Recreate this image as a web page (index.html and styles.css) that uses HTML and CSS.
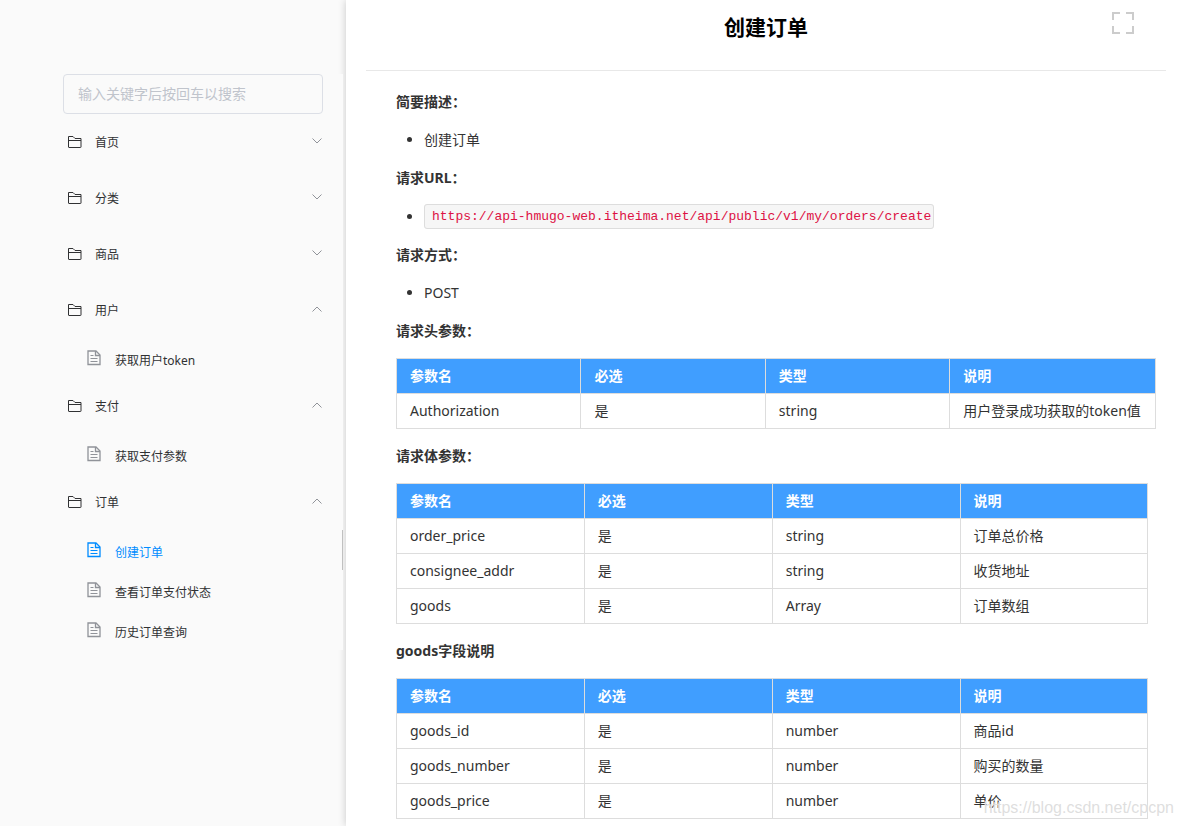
FILE: index.html
```html
<!DOCTYPE html>
<html lang="zh-CN">
<head>
<meta charset="utf-8">
<meta name="viewport" content="width=device-width, initial-scale=1">
<title>创建订单</title>
<link rel="stylesheet" href="styles.css">
</head>
<body>
<svg class="symbols" aria-hidden="true">
  <symbol id="folder" viewBox="0 0 16 14"><path d="M1.500 12V1.500h4.500l2 2h6V12q0 .5-.5 .5H2q-.5 0-.5-.5zM1.500 5.500h12.500" fill="none" stroke="currentColor"/></symbol>
  <symbol id="doc" viewBox="0 0 14 16"><path d="M1 1h8l4 4v9.500H1z" fill="none" stroke="currentColor" stroke-width="1.300"/><path d="M8.500 1v4.500H13" fill="none" stroke="currentColor" stroke-width="1.300"/><path d="M3.500 5.500h3M3.500 8.500h7M3.500 11.500h7" stroke="currentColor" stroke-width="1.200"/></symbol>
  <symbol id="down" viewBox="0 0 10 6"><path d="M.5 .5 5 5 9.500 .5" fill="none" stroke="currentColor"/></symbol>
  <symbol id="up" viewBox="0 0 10 6"><path d="M.5 5.500 5 1l4.500 4.500" fill="none" stroke="currentColor"/></symbol>
</svg>
<div class="layout">
  <aside class="sidebar">
    <nav class="menu">
      <div class="search"><input class="search-input" type="text" aria-label="搜索" placeholder="输入关键字后按回车以搜索"></div>
      <button class="group" type="button"><svg class="folder"><use href="#folder"/></svg><span class="group-name">首页</span><svg class="arrow"><use href="#down"/></svg></button>
      <button class="group" type="button"><svg class="folder"><use href="#folder"/></svg><span class="group-name">分类</span><svg class="arrow"><use href="#down"/></svg></button>
      <button class="group" type="button"><svg class="folder"><use href="#folder"/></svg><span class="group-name">商品</span><svg class="arrow"><use href="#down"/></svg></button>
      <button class="group" type="button"><svg class="folder"><use href="#folder"/></svg><span class="group-name">用户</span><svg class="arrow"><use href="#up"/></svg></button>
      <a class="item" href="#"><svg class="doc"><use href="#doc"/></svg><span class="item-name">获取用户token</span></a>
      <button class="group" type="button"><svg class="folder"><use href="#folder"/></svg><span class="group-name">支付</span><svg class="arrow"><use href="#up"/></svg></button>
      <a class="item" href="#"><svg class="doc"><use href="#doc"/></svg><span class="item-name">获取支付参数</span></a>
      <button class="group" type="button"><svg class="folder"><use href="#folder"/></svg><span class="group-name">订单</span><svg class="arrow"><use href="#up"/></svg></button>
      <a class="item active" href="#"><svg class="doc"><use href="#doc"/></svg><span class="item-name">创建订单</span></a>
      <a class="item" href="#"><svg class="doc"><use href="#doc"/></svg><span class="item-name">查看订单支付状态</span></a>
      <a class="item" href="#"><svg class="doc"><use href="#doc"/></svg><span class="item-name">历史订单查询</span></a>
    </nav>
  </aside>
  <main class="main">
    <header class="header">
      <h1 class="title">创建订单</h1>
      <button class="fullscreen" type="button" aria-label="全屏"><svg class="fullscreen-icon" viewBox="0 0 22 22"><path d="M1 8V1h7M14 1h7v7M21 14v7h-7M8 21H1v-7" fill="none" stroke="currentColor" stroke-width="2"/></svg></button>
    </header>
    <article class="content">
      <p class="label">简要描述：</p>
      <ul class="list"><li>创建订单</li></ul>
      <p class="label">请求URL：</p>
      <ul class="list list-code"><li><code class="url">https://api-hmugo-web.itheima.net/api/public/v1/my/orders/create</code></li></ul>
      <p class="label">请求方式：</p>
      <ul class="list"><li>POST</li></ul>
      <p class="label">请求头参数：</p>
      <table class="params params-wide">
        <thead><tr><th>参数名</th><th>必选</th><th>类型</th><th>说明</th></tr></thead>
        <tbody><tr><td>Authorization</td><td>是</td><td>string</td><td>用户登录成功获取的token值</td></tr></tbody>
      </table>
      <p class="label">请求体参数：</p>
      <table class="params">
        <thead><tr><th>参数名</th><th>必选</th><th>类型</th><th>说明</th></tr></thead>
        <tbody>
          <tr><td>order_price</td><td>是</td><td>string</td><td>订单总价格</td></tr>
          <tr><td>consignee_addr</td><td>是</td><td>string</td><td>收货地址</td></tr>
          <tr><td>goods</td><td>是</td><td>Array</td><td>订单数组</td></tr>
        </tbody>
      </table>
      <p class="label">goods字段说明</p>
      <table class="params">
        <thead><tr><th>参数名</th><th>必选</th><th>类型</th><th>说明</th></tr></thead>
        <tbody>
          <tr><td>goods_id</td><td>是</td><td>number</td><td>商品id</td></tr>
          <tr><td>goods_number</td><td>是</td><td>number</td><td>购买的数量</td></tr>
          <tr><td>goods_price</td><td>是</td><td>number</td><td>单价</td></tr>
        </tbody>
      </table>
    </article>
  </main>
</div>
<div class="watermark">https://blog.csdn.net/cpcpn</div>
</body>
</html>
```

FILE: styles.css
```css
* { box-sizing: border-box; }

body {
  margin: 0;
  background: #fff;
  color: #333;
  font: 14px/22px "Noto Sans", "Noto Sans CJK SC", sans-serif;
}

.symbols { display: none; }

.layout {
  display: flex;
  min-height: 100vh;
}

.sidebar {
  flex: 0 0 346px;
  padding: 74px 3px 0 0;
  background: #fafafa;
}

.menu {
  position: relative;
  z-index: 1;
  display: flex;
  flex-direction: column;
  background: #fafafa;
}

.search { padding: 0 20px 0 63px; }

.search-input {
  display: block;
  width: 100%;
  height: 40px;
  padding: 0 14px 2px;
  border: 1px solid #dcdfe6;
  border-radius: 4px;
  background: transparent;
  font: inherit;
}

.search-input::placeholder { color: #c0c4cc; }

.group {
  display: flex;
  align-items: center;
  height: 56px;
  padding: 0 21px 0 67px;
  border: 0;
  background: none;
  color: #303133;
  font: inherit;
  font-size: 12px;
  text-align: left;
}

.folder {
  width: 16px;
  height: 14px;
}

.group-name {
  flex: 1;
  margin-left: 12px;
  padding-top: 2px;
}

.arrow {
  width: 10px;
  height: 6px;
  margin-bottom: 2px;
  color: #909399;
}

.item {
  display: flex;
  align-items: center;
  height: 40px;
  padding-left: 87px;
  border-right: 1px solid transparent;
  color: #303133;
  font-size: 12px;
  text-decoration: none;
}

.doc {
  width: 14px;
  height: 16px;
  color: #909399;
}

.item-name {
  margin-left: 14px;
  padding-top: 6px;
}

.active { border-color: #c0c0c0; }
.active, .active .doc { color: #008cff; }

.main {
  flex: 1;
  min-width: 0;
  padding: 0 16px 0 20px;
  background: #fff;
  box-shadow: 0 0 8px rgba(0, 0, 0, 0.2);
}

.header {
  display: grid;
  grid-template-columns: 1fr auto 1fr;
  align-items: start;
  height: 71px;
  padding: 12px 32px 0;
  border-bottom: 1px solid #e8e8e8;
}

.title {
  grid-column: 2;
  margin: 0;
  color: #000;
  font-size: 21px;
  line-height: 30px;
}

.fullscreen {
  justify-self: end;
  padding: 0;
  border: 0;
  background: none;
  color: #ccc;
}

.fullscreen-icon {
  display: block;
  width: 22px;
  height: 22px;
}

.content { padding: 20px 10px 0 30px; }

.label {
  margin: 0 0 16px;
  font-weight: 700;
}

.list {
  margin: 0 0 16px;
  padding-left: 28px;
}

.list-code { line-height: 23px; }

.url {
  padding: 4px 2px 4px 7px;
  border: 1px solid #ddd;
  border-radius: 3px;
  background: #f6f6f6;
  color: #dd1144;
  font: 13px "Liberation Mono", monospace;
  vertical-align: 2px;
}

.params {
  width: 99%;
  margin-bottom: 16px;
  border-collapse: collapse;
  table-layout: fixed;
}

.params th, .params td {
  height: 35px;
  padding: 6px 13px;
  border: 1px solid #ddd;
  text-align: left;
}

.params th {
  background: #409eff;
  color: #fff;
}

.params-wide { width: 100%; }
.params-wide th:not(:last-child) { width: 24.3%; }
.params:last-child { margin-bottom: 0; }

.watermark {
  position: absolute;
  right: 8px;
  bottom: 7px;
  color: rgba(200, 200, 200, 0.6);
  font: 16px/22px "Liberation Sans", sans-serif;
  text-shadow: 0 0 1px #fff;
}
```
